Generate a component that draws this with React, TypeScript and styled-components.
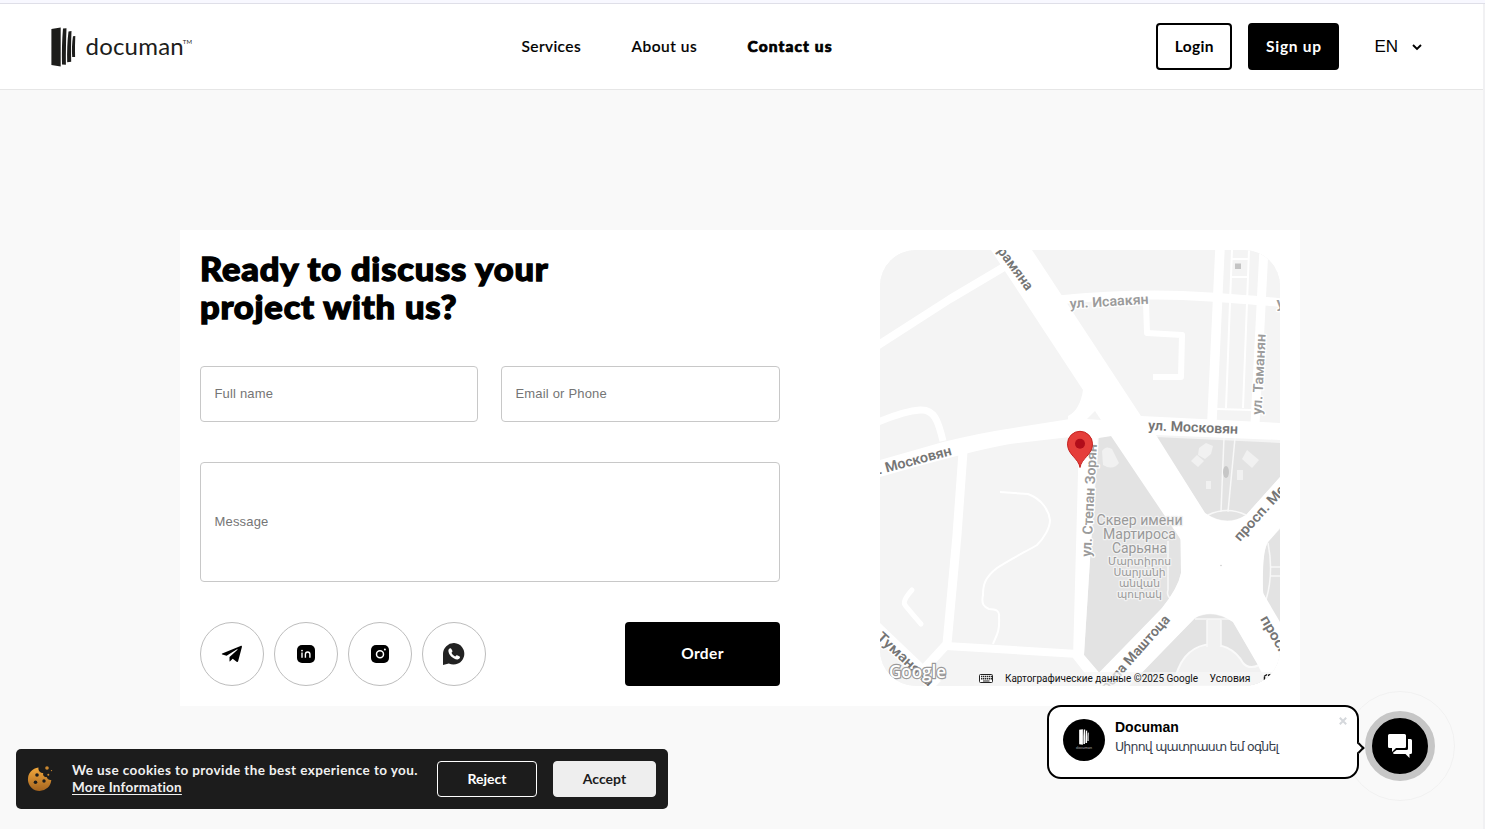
import React from "react";
import styled, { createGlobalStyle, css } from "styled-components";

const Global = createGlobalStyle`
  *, *::before, *::after { box-sizing: border-box; }
  html, body { margin: 0; padding: 0; overflow: hidden; }
  body { background: #f9f9f9; color: #000; font-family: Lato, "Liberation Sans", sans-serif; }
  button, input, textarea { font-family: inherit; }
  a { color: inherit; text-decoration: none; }
`;

const Page = styled.div`
  width: 1485px;
  height: 829px;
  background: #f9f9f9;
  border-right: 2px solid #f1f1f3;
`;

const TopStrip = styled.div`
  width: 1485px;
  height: 4px;
  background: #f8f8ff;
  border-bottom: 1px solid #dfdfe8;
`;

const Header = styled.header`
  display: flex;
  align-items: center;
  height: 86px;
  padding: 0 60px 0 51px;
  background: #fff;
  border-bottom: 1px solid #e6e6e6;
`;

const Brand = styled.a`
  display: flex;
  align-items: center;
  width: 470px;
  height: 40px;
  color: #1d1d1b;
`;

const BrandName = styled.span`
  margin: -1px 0 0 9.5px;
  font-size: 24px;
  line-height: 30px;
  letter-spacing: 0.2px;
`;

const Trademark = styled.span`
  align-self: flex-start;
  margin: 11px 0 0 -1px;
  font-size: 6px;
  line-height: 8px;
`;

const Nav = styled.nav`
  display: flex;
  flex: 1;
`;

const NavLink = styled.a<{ $width: number; $spacing: number; $active?: boolean }>`
  width: ${(p) => p.$width}px;
  padding: 0 0 2px 0.5px;
  font-size: 15.5px;
  line-height: 20px;
  white-space: nowrap;
  letter-spacing: ${(p) => p.$spacing}px;
  font-weight: ${(p) => (p.$active ? 900 : 500)};
  -webkit-text-stroke: ${(p) => (p.$active ? "0.7px" : "0.2px")} #000;
`;

const Actions = styled.div`
  display: flex;
  align-items: center;
  gap: 16px;
`;

const AuthButton = styled.button<{ $filled?: boolean }>`
  width: ${(p) => (p.$filled ? 91 : 76)}px;
  height: 47px;
  padding: 0 0 2px;
  border: 2px solid #000;
  border-radius: 4px;
  background: ${(p) => (p.$filled ? "#000" : "#fff")};
  color: ${(p) => (p.$filled ? "#fff" : "#000")};
  font-size: 15.5px;
  font-weight: 700;
  letter-spacing: ${(p) => (p.$filled ? 0.7 : 0.35)}px;
`;

const Language = styled.div`
  display: flex;
  align-items: center;
  gap: 13px;
  margin-left: 19px;
  font: 17px/20px "Liberation Sans", sans-serif;
`;

const Main = styled.main`
  padding: 140px 0 0 180px;
`;

const Card = styled.section`
  display: flex;
  justify-content: space-between;
  width: 1120px;
  height: 476px;
  padding: 20px;
  background: #fff;
`;

const Form = styled.form`
  display: flex;
  flex-direction: column;
  width: 580px;
`;

const Title = styled.h1`
  margin: 0 0 40px;
  font-size: 32px;
  line-height: 38px;
  font-weight: 900;
  letter-spacing: 0.75px;
  white-space: nowrap;
  -webkit-text-stroke: 1.3px #000;
  transform: scaleX(1.077);
  transform-origin: left center;
`;

const FieldRow = styled.div`
  display: grid;
  grid-template-columns: 278px 279px;
  justify-content: space-between;
  margin-bottom: 40px;
`;

const fieldStyle = css`
  display: block;
  border: 1px solid #c8c8c8;
  border-radius: 4px;
  background: #fff;
  font: 13px/16px "Liberation Sans", sans-serif;
  letter-spacing: 0.18px;
  outline: none;
  &::placeholder { color: #757575; opacity: 1; }
`;

const Input = styled.input`
  ${fieldStyle}
  width: 100%;
  height: 56px;
  padding: 0 13.5px 2px;
`;

const Message = styled.textarea`
  ${fieldStyle}
  height: 120px;
  margin-bottom: 40px;
  padding: 51px 13.5px;
  resize: none;
`;

const FormFooter = styled.div`
  display: flex;
  justify-content: space-between;
`;

const Socials = styled.div`
  display: flex;
  gap: 10px;
`;

const SocialLink = styled.a`
  display: grid;
  place-items: center;
  width: 64px;
  height: 64px;
  border: 1px solid #bdbdbd;
  border-radius: 50%;
`;

const OrderButton = styled.button`
  width: 155px;
  height: 64px;
  padding: 0 0 2px;
  border: 0;
  border-radius: 4px;
  background: #000;
  color: #fff;
  font-size: 15.5px;
  font-weight: 700;
  letter-spacing: 0.35px;
`;

const MapFrame = styled.div`
  width: 400px;
  height: 436px;
  overflow: hidden;
  border-radius: 36px;
  background: #f4f4f4;
  svg { display: block; }
`;

const CookieBar = styled.aside`
  position: fixed;
  left: 16px;
  top: 749px;
  display: flex;
  align-items: center;
  width: 652px;
  height: 60px;
  padding: 0 12px 0 11px;
  border-radius: 5px;
  background: #1c1c1c;
  color: #f0f0f0;
`;

const CookieText = styled.p`
  flex: 1;
  margin: 0 0 0 19px;
  font-size: 13.5px;
  line-height: 17px;
  font-weight: 700;
  white-space: nowrap;
  a { text-decoration: underline; text-underline-offset: 2px; }
`;

const CookieLine = styled.span<{ $spacing: number }>`
  display: block;
  letter-spacing: ${(p) => p.$spacing}px;
`;

const CookieButton = styled.button<{ $light?: boolean }>`
  width: ${(p) => (p.$light ? 103 : 100)}px;
  height: 36px;
  margin-left: ${(p) => (p.$light ? 16 : 0)}px;
  padding: 0 0 1px;
  border: 1px solid ${(p) => (p.$light ? "#eee" : "#fff")};
  border-radius: 4px;
  background: ${(p) => (p.$light ? "#eee" : "transparent")};
  color: ${(p) => (p.$light ? "#1c1c1c" : "#fff")};
  font-size: 14px;
  font-weight: 700;
`;

const ChatPulse = styled.div`
  position: fixed;
  left: 1345px;
  top: 691px;
  display: grid;
  place-items: center;
  width: 110px;
  height: 110px;
  border: 1px solid #f1f1f1;
  border-radius: 50%;
`;

const ChatButton = styled.button`
  display: grid;
  place-items: center;
  width: 70px;
  height: 70px;
  padding: 0;
  border: 7px solid #c6c6c6;
  border-radius: 50%;
  background: #000;
`;

const ChatBubble = styled.div`
  position: fixed;
  left: 1047px;
  top: 705px;
  display: flex;
  width: 312px;
  height: 74px;
  padding: 12px 14px;
  border: 2px solid #000;
  border-radius: 14px;
  background: #fff;
  &::after {
    content: "";
    position: absolute;
    right: -6px;
    top: 37px;
    width: 8px;
    height: 8px;
    border-top: 2px solid #000;
    border-right: 2px solid #000;
    background: #fff;
    transform: rotate(45deg);
  }
`;

const Avatar = styled.div`
  display: flex;
  flex-direction: column;
  align-items: center;
  width: 42px;
  height: 42px;
  padding-top: 10px;
  border-radius: 50%;
  background: #000;
  color: #aaa;
  font-size: 4px;
  line-height: 5px;
`;

const ChatText = styled.div`
  display: flex;
  flex-direction: column;
  margin-left: 10px;
  white-space: nowrap;
`;

const ChatName = styled.strong`
  font: 700 14px/17px "Liberation Sans", sans-serif;
`;

const ChatMessage = styled.span`
  margin-top: 2px;
  color: #37404d;
  font: 12.5px/17px "DejaVu Sans", sans-serif;
  letter-spacing: -0.78px;
`;

const CloseMark = styled.svg`
  position: absolute;
  right: 10px;
  top: 10px;
`;

const LogoBars = ({ width, height, fill }: { width: number; height: number; fill: string }) => (
  <svg width={width} height={height} viewBox="0 0 25 40" fill={fill}>
    <path d="M.4 2 9.7.5V39.5L.4 38ZM12 1.400 15.500 1.200C15 14 14.800 26 14.900 37.700L11 37.500C10.700 25 11 13 12 1.400ZM17.500 4.500 20.500 4C20 15 20 25 20.200 34.800L16.200 35.300C15.900 25 16.300 14 17.500 4.500ZM22 9.300 24.300 9C23.900 16 23.900 23 24.100 30L21.200 30C20.700 23 21 16 22 9.300Z" />
  </svg>
);

const TelegramIcon = () => (
  <svg width="22" height="20" viewBox="0 0 22 20">
    <path fill="#000" d="M1.200 9.400C.6 9.600.7 10.200 1.300 10.500L5.600 11.800 16 5.300C16.500 5 16.900 5.300 16.500 5.700L8.500 12.900V17.400C9 17.400 9.300 17.100 9.600 16.800L11.700 14.800 15.600 17.800C16.400 18.200 17 18 17.200 17L20.900 3.100C21.100 2 20.500 1.600 19.600 1.900Z" />
  </svg>
);

const LinkedinIcon = () => (
  <svg width="18" height="18" viewBox="0 0 18 18" fill="none">
    <rect width="18" height="18" rx="5" fill="#000" />
    <path d="M5 7.500V12.700M8.400 12.800V9.300C8.400 6.200 12.900 6.200 12.900 9.300V12.800" stroke="#fff" strokeWidth="1.4" />
    <circle cx="5" cy="5.600" r=".9" fill="#fff" />
  </svg>
);

const InstagramIcon = () => (
  <svg width="18" height="18" viewBox="0 0 18 18" fill="none">
    <rect width="18" height="18" rx="5" fill="#000" />
    <circle cx="9" cy="9.300" r="3.500" stroke="#fff" strokeWidth="1.500" />
    <circle cx="13.900" cy="4.500" r="1" fill="#fff" />
  </svg>
);

const WhatsappIcon = () => (
  <svg width="22" height="22" viewBox="0 0 22 22">
    <path fill="#222" d="M11.200 0A10.800 10.800 0 1 1 5.800 20.500L0 22V11A11 11 0 0 1 11.200 0Z" />
    <path fill="#fff" d="M7.600 5.200C7 4.900 5.600 5.700 5.400 7.300 5 11.700 10.500 16.700 14.600 16.400 16.200 16.200 17.200 15 17 13.800 16.800 13.200 14.200 11.800 13.500 12.200L12.200 13.400C10.800 12.900 9.100 11.200 8.500 9.700L9.500 8.400C9.600 7.700 8.300 5.400 7.600 5.200Z" />
  </svg>
);

const CookieIcon = () => (
  <svg width="26" height="26" viewBox="0 0 26 26">
    <defs>
      <linearGradient id="cookie" x1="0" y1="0" x2="0" y2="1">
        <stop offset="0" stopColor="#f2a83c" />
        <stop offset="1" stopColor="#a5641f" />
      </linearGradient>
    </defs>
    <path fill="url(#cookie)" d="M11.5 1.6A11.7 11.7 0 1 0 24.3 14C22.2 14.3 20.2 13.4 19.8 11.1 16.9 11.4 15.5 9.5 16.2 7.1 12.9 7.2 10.9 4.5 11.5 1.6Z" />
    <g fill="#1c1c1c"><circle cx="10" cy="9" r="1.8" /><circle cx="8.5" cy="16.3" r="1.8" /><circle cx="17" cy="15" r="1.7" /></g>
    <g fill="#cc8930"><circle cx="20" cy="2" r="1.8" /><circle cx="24.5" cy="4.6" r=".7" /><circle cx="21.3" cy="8.8" r="1" /></g>
  </svg>
);

const ChatIcon = () => (
  <svg width="24" height="24" viewBox="0 0 24 24" fill="#fff">
    <path d="M1.500 0H16.500Q18 0 18 1.500V12.500Q18 14 16.500 14H8L4 18V14H1.500Q0 14 0 12.500V1.500Q0 0 1.500 0Z" />
    <path d="M20 5H22.500Q24 5 24 6.500V18.500Q24 20 22.500 20H21.500V24L17.500 20H6.500Q5 20 5 18.800L8.500 16H18.500Q20 16 20 14.500Z" />
  </svg>
);

type LabelProps = {
  x: number;
  y: number;
  length: number;
  rotate?: number;
  size?: number;
  color?: string;
  weight?: number;
  anchor?: "start" | "middle";
  children: string;
};

const StreetLabel = ({ x, y, length, rotate = 0, size = 14, color = "#757575", weight = 600, anchor = "start", children }: LabelProps) => (
  <text
    transform={`translate(${x} ${y}) rotate(${rotate})`}
    textLength={length}
    lengthAdjust="spacingAndGlyphs"
    textAnchor={anchor}
    fontFamily='Roboto, "DejaVu Sans", sans-serif'
    fontSize={size}
    fontWeight={weight}
    fill={color}
    stroke={weight === 400 ? "#f1f1f1" : "#fff"}
    strokeWidth="2.5"
    strokeLinejoin="round"
    paintOrder="stroke"
  >
    {children}
  </text>
);

const CityMap = () => (
  <svg width="400" height="436" viewBox="880 250 400 436">
    <rect x="880" y="250" width="400" height="436" fill="#f4f4f4" />

    {/* parks */}
    <g fill="#e3e3e3">
      <path d="M1099 437 1112 436 1180 537 1181 573Q1178 589 1162 608L1100 674 1084 655 1090 560Z" />
      <path d="M1156 437 1280 443V477L1246 515Q1226 527 1205 513Z" />
      <path d="M1280 529 1268 542Q1261 553 1263 590 1263 597 1280 623Z" />
      <path d="M1195 618Q1213 609 1233 622L1262 671V686H1128Z" />
    </g>
    <path d="M1174 686C1180 635 1228 635 1243 663Q1249 670 1259 665L1268 686Z" fill="#f1f1f1" stroke="#fafafa" strokeWidth="2" />
    <g fill="#f1f1f1">
      <path d="M1207 619H1221V646H1207ZM1102 451Q1106 445 1112 449L1119 463Q1113 471 1103 465ZM1199 448 1206 443 1213 446 1211 454 1205 459 1198 455ZM1191 461 1197 455 1204 461 1198 467ZM1247 450 1259 460 1252 468 1242 459ZM1206 481H1211V489H1206ZM1237 470H1243V480H1237Z" />
    </g>
    <g fill="none" stroke="#f8f8f8" strokeWidth="1.5">
      <path d="M1224 437 1221 512M1235 438 1228 512M1208 515Q1227 506 1246 515M1168 541V590Q1166 596 1172 600M1268 543Q1274 573 1266 600M1270 567H1280M1270 576H1280M1195 619H1233M1207 620V647M1221 620V647" />
    </g>
    <ellipse cx="1226" cy="472" rx="3" ry="6" fill="#c6c6c6" />

    {/* avenues and square */}
    <g fill="#fff">
      <path d="M991 250H1032L1141 416 1280 423V440L1156 435 1205 513Q1226 528 1246 515L1280 477V528L1268 542Q1262 551 1263 593L1280 622V686H1270L1233 622Q1213 608 1195 618L1129 686H1086L1162 608Q1178 588 1181 573V540L1111 436 1093 439 1068 437V416Q1080 410 1083 390Z" />
      <path d="M880 460 943 442Q980 433 1007 429L1070 419V437L1010 444Q970 451 880 477Z" />
      <path d="M1079 436H1098L1090 560 1084 655 1102 676V686H1095L1073 658Z" />
    </g>
    <path d="M1095 411 1101 420 1087 419Z" fill="#f4f4f4" />

    {/* side streets */}
    <g fill="none" stroke="#fff" strokeLinejoin="round">
      <path d="M1004 267 950 299 877 346" strokeWidth="8" />
      <path d="M878 422Q905 411 920 410C934 409 938 420 943 441" strokeWidth="7" />
      <path d="M963 452 957 535 947 644 925 668" strokeWidth="9" />
      <path d="M946 646 1078 654" strokeWidth="8" />
      <path d="M872 625 936 686" strokeWidth="14" />
      <path d="M1058 300Q1140 292 1210 297T1282 303" strokeWidth="9" />
      <path d="M1146 303 1147 333 1182 335 1181 377H1153" strokeWidth="6" />
      <path d="M1220 248 1212 420" strokeWidth="9.5" />
      <path d="M1264 248 1255 424" strokeWidth="9" />
      <path d="M912 590Q902 601 905 605T921 624" strokeWidth="5" strokeLinecap="round" />
      <path d="M1000 492 1028 494C1042 499 1049 511 1050 520 1050 528 1044 538 1037 545 1025 552 1009 560 997 568 984 578 983 586 983 595 981 604 984 607 989 609 996 609 1000 611 999 617 1000 632 996 636 993 644" strokeWidth="2" />
      <path d="M1232 250 1226 408M1249 250 1243 408M1232 259H1249M1231 277H1248M1217 409 1251 410" strokeWidth="2" />
    </g>
    <rect x="1235" y="263.500" width="6" height="5.500" fill="#c4c4c4" />
    <circle cx="1221" cy="565.500" r=".8" fill="#ccc" />

    <StreetLabel x={997} y={251} length={50} rotate={54}>рамяна</StreetLabel>
    <StreetLabel x={1070} y={308.500} length={79} rotate={-3.500} color="#9b9b9b">ул. Исаакян</StreetLabel>
    <StreetLabel x={1276.500} y={308} length={8} color="#9b9b9b">у</StreetLabel>
    <StreetLabel x={1261.500} y={415} length={81} rotate={-87} color="#9b9b9b">ул. Таманян</StreetLabel>
    <StreetLabel x={1148} y={430} length={90} rotate={2.500}>ул. Московян</StreetLabel>
    <StreetLabel x={879} y={474.500} length={76} rotate={-15}>. Московян</StreetLabel>
    <StreetLabel x={1091} y={557} length={113} rotate={-87} color="#9b9b9b">ул. Степан Зорян</StreetLabel>
    <StreetLabel x={1240} y={542} length={110} rotate={-48}>просп. Месропа</StreetLabel>
    <StreetLabel x={1107} y={692} length={96} rotate={-48.500}>ропа Маштоца</StreetLabel>
    <StreetLabel x={1260} y={619} length={48} rotate={60}>просп.</StreetLabel>
    <StreetLabel x={876} y={638} length={72} rotate={43}>Туманяна</StreetLabel>

    <StreetLabel x={1139.500} y={525} length={86} anchor="middle" weight={400} color="#999">Сквер имени</StreetLabel>
    <StreetLabel x={1139.500} y={539} length={73} anchor="middle" weight={400} color="#999">Мартироса</StreetLabel>
    <StreetLabel x={1139.500} y={553} length={55} anchor="middle" weight={400} color="#999">Сарьяна</StreetLabel>
    <StreetLabel x={1139.500} y={565} length={63} anchor="middle" weight={400} size={10.500} color="#999">Մարտիրոս</StreetLabel>
    <StreetLabel x={1139.500} y={576} length={52} anchor="middle" weight={400} size={10.500} color="#999">Սարյանի</StreetLabel>
    <StreetLabel x={1139.500} y={587} length={41} anchor="middle" weight={400} size={10.500} color="#999">անվան</StreetLabel>
    <StreetLabel x={1139.500} y={598} length={45} anchor="middle" weight={400} size={10.500} color="#999">պուրակ</StreetLabel>

    {/* marker */}
    <path d="M1080 467.500C1078.500 458 1067.500 455 1067.500 443.800A12.500 12.500 0 0 1 1092.500 443.800C1092.500 455 1081.500 458 1080 467.500Z" fill="#e53e3a" stroke="#c5221f" />
    <circle cx="1080" cy="443.800" r="5" fill="#b10d1a" />

    {/* attribution */}
    <rect x="974" y="672" width="306" height="14" fill="#f5f5f5" opacity=".75" />
    <text x="889" y="678" textLength="57" lengthAdjust="spacingAndGlyphs" fontFamily='"Open Sans", sans-serif' fontSize="18" fontWeight="600" fill="#fff" stroke="#999" strokeWidth="2.400" paintOrder="stroke">Google</text>
    <rect x="979.500" y="674.500" width="13" height="8" rx="1" fill="#fff" stroke="#222" />
    <path d="M981 676.500H992M981 678.800H992" stroke="#222" strokeWidth="1.400" strokeDasharray="1.400 .6" />
    <path d="M983 681H989.500" stroke="#222" strokeWidth="1.200" />
    <g fontFamily="Roboto, sans-serif" fontSize="10" fill="#111">
      <text x="1005" y="682" textLength="193" lengthAdjust="spacingAndGlyphs">Картографические данные ©2025 Google</text>
      <text x="1209.500" y="682" textLength="41" lengthAdjust="spacingAndGlyphs">Условия</text>
    </g>
    <path d="M1264.500 680V677M1264 676.500 1267 674.500M1266.500 679 1270 676.500M1268 675.500 1270.500 674.500" stroke="#111" strokeWidth="1.500" />
  </svg>
);

const socials = [
  { name: "Telegram", Icon: TelegramIcon },
  { name: "LinkedIn", Icon: LinkedinIcon },
  { name: "Instagram", Icon: InstagramIcon },
  { name: "WhatsApp", Icon: WhatsappIcon },
];

export default function App() {
  return (
    <>
      <Global />
      <Page>
        <TopStrip />
        <Header>
          <Brand href="#">
            <LogoBars width={25} height={40} fill="#1d1d1b" />
            <BrandName>documan</BrandName>
            <Trademark>TM</Trademark>
          </Brand>
          <Nav>
            <NavLink href="#" $width={110} $spacing={0.4}>Services</NavLink>
            <NavLink href="#" $width={116} $spacing={0.5}>About us</NavLink>
            <NavLink href="#" $width={100} $spacing={1.1} $active>Contact us</NavLink>
          </Nav>
          <Actions>
            <AuthButton>Login</AuthButton>
            <AuthButton $filled>Sign up</AuthButton>
            <Language>
              EN
              <svg width="12" height="12" viewBox="0 0 12 12" fill="none" stroke="#000" strokeWidth="1.9">
                <path d="M2 4 6 8 10 4" />
              </svg>
            </Language>
          </Actions>
        </Header>
        <Main>
          <Card>
            <Form>
              <Title>Ready to discuss your<br />project with us?</Title>
              <FieldRow>
                <Input placeholder="Full name" />
                <Input placeholder="Email or Phone" />
              </FieldRow>
              <Message placeholder="Message" />
              <FormFooter>
                <Socials>
                  {socials.map(({ name, Icon }) => (
                    <SocialLink href="#" key={name} aria-label={name}><Icon /></SocialLink>
                  ))}
                </Socials>
                <OrderButton type="button">Order</OrderButton>
              </FormFooter>
            </Form>
            <MapFrame><CityMap /></MapFrame>
          </Card>
        </Main>
      </Page>
      <CookieBar>
        <CookieIcon />
        <CookieText>
          <CookieLine $spacing={0.41}>We use cookies to provide the best experience to you.</CookieLine>
          <a href="#"><CookieLine $spacing={0.22}>More Information</CookieLine></a>
        </CookieText>
        <CookieButton>Reject</CookieButton>
        <CookieButton $light>Accept</CookieButton>
      </CookieBar>
      <ChatPulse>
        <ChatButton aria-label="Chat"><ChatIcon /></ChatButton>
      </ChatPulse>
      <ChatBubble>
        <Avatar>
          <LogoBars width={10} height={16} fill="#fff" />
          documan
        </Avatar>
        <ChatText>
          <ChatName>Documan</ChatName>
          <ChatMessage>Սիրով պատրաստ եմ օգնել</ChatMessage>
        </ChatText>
        <CloseMark width="8" height="8" viewBox="0 0 8 8" stroke="#d5d8dc" strokeWidth="2">
          <path d="M.8.8 7.200 7.200M7.200.8.8 7.200" />
        </CloseMark>
      </ChatBubble>
    </>
  );
}
